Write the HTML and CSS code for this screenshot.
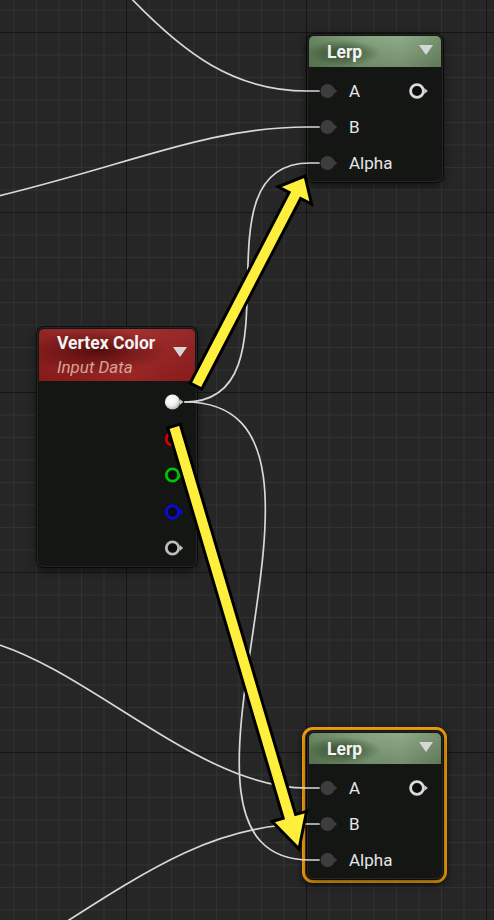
FILE: index.html
```html
<!DOCTYPE html>
<html>
<head>
<meta charset="utf-8">
<link rel="stylesheet" href="styles.css">
</head>
<body>
<div class="canvas">

  <div class="node lerp lerp-top">
    <div class="node-header"><span class="title">Lerp</span><span class="caret"></span></div>
    <div class="node-body">
      <div class="row">
        <svg class="pin-in" width="18" height="16" viewBox="0 0 18 16"><circle cx="7.5" cy="8" r="7" fill="#3d3d3d"/><path d="M14 5.2 L17.2 8 L14 10.8Z" fill="#3d3d3d"/></svg>
        <span class="label">A</span>
        <svg class="out" width="24" height="18" viewBox="0 0 24 18"><circle cx="9" cy="9" r="6.4" fill="#0c0c0c" stroke="#dadada" stroke-width="2.8"/><path d="M16.4 6 L19.8 9 L16.4 12Z" fill="#d0d0d0"/></svg>
      </div>
      <div class="row">
        <svg class="pin-in" width="18" height="16" viewBox="0 0 18 16"><circle cx="7.5" cy="8" r="7" fill="#3d3d3d"/><path d="M14 5.2 L17.2 8 L14 10.8Z" fill="#3d3d3d"/></svg>
        <span class="label">B</span>
      </div>
      <div class="row">
        <svg class="pin-in" width="18" height="16" viewBox="0 0 18 16"><circle cx="7.5" cy="8" r="7" fill="#3d3d3d"/><path d="M14 5.2 L17.2 8 L14 10.8Z" fill="#3d3d3d"/></svg>
        <span class="label">Alpha</span>
      </div>
    </div>
  </div>

  <div class="node vc">
    <div class="node-header">
      <div class="titles">
        <div class="title">Vertex Color</div>
        <div class="subtitle">Input Data</div>
      </div>
      <span class="caret"></span>
    </div>
    <div class="node-body">
      <div class="row">
        <svg width="22" height="18" viewBox="0 0 22 18"><defs><radialGradient id="wg" cx="40%" cy="35%" r="65%"><stop offset="0" stop-color="#ffffff"/><stop offset="0.6" stop-color="#f0f0f0"/><stop offset="1" stop-color="#b5b5b5"/></radialGradient></defs><circle cx="8.5" cy="9" r="7.6" fill="url(#wg)"/><path d="M16 6.2 L19.4 9 L16 11.8Z" fill="#c8c8c8"/></svg>
      </div>
      <div class="row">
        <svg width="22" height="18" viewBox="0 0 22 18"><circle cx="8.5" cy="9" r="6.2" fill="#0c0c0c" stroke="#d80000" stroke-width="2.8"/><path d="M15.8 6 L19.2 9 L15.8 12Z" fill="#d80000"/></svg>
      </div>
      <div class="row">
        <svg width="22" height="18" viewBox="0 0 22 18"><circle cx="8.5" cy="9" r="6.2" fill="#0c0c0c" stroke="#00c400" stroke-width="2.8"/><path d="M15.8 6 L19.2 9 L15.8 12Z" fill="#00c400"/></svg>
      </div>
      <div class="row">
        <svg width="22" height="18" viewBox="0 0 22 18"><circle cx="8.5" cy="9" r="6.2" fill="#0c0c0c" stroke="#0a0ae0" stroke-width="2.8"/><path d="M15.8 6 L19.2 9 L15.8 12Z" fill="#0a0ae0"/></svg>
      </div>
      <div class="row">
        <svg width="22" height="18" viewBox="0 0 22 18"><circle cx="8.5" cy="9" r="6.2" fill="#0c0c0c" stroke="#bdbdbd" stroke-width="2.8"/><path d="M15.8 6 L19.2 9 L15.8 12Z" fill="#bdbdbd"/></svg>
      </div>
    </div>
  </div>

  <div class="selected">
    <div class="node lerp">
      <div class="node-header"><span class="title">Lerp</span><span class="caret"></span></div>
      <div class="node-body">
        <div class="row">
          <svg class="pin-in" width="18" height="16" viewBox="0 0 18 16"><circle cx="7.5" cy="8" r="7" fill="#3d3d3d"/><path d="M14 5.2 L17.2 8 L14 10.8Z" fill="#3d3d3d"/></svg>
          <span class="label">A</span>
          <svg class="out" width="24" height="18" viewBox="0 0 24 18"><circle cx="9" cy="9" r="6.4" fill="#0c0c0c" stroke="#dadada" stroke-width="2.8"/><path d="M16.4 6 L19.8 9 L16.4 12Z" fill="#d0d0d0"/></svg>
        </div>
        <div class="row">
          <svg class="pin-in" width="18" height="16" viewBox="0 0 18 16"><circle cx="7.5" cy="8" r="7" fill="#3d3d3d"/><path d="M14 5.2 L17.2 8 L14 10.8Z" fill="#3d3d3d"/></svg>
          <span class="label">B</span>
        </div>
        <div class="row">
          <svg class="pin-in" width="18" height="16" viewBox="0 0 18 16"><circle cx="7.5" cy="8" r="7" fill="#3d3d3d"/><path d="M14 5.2 L17.2 8 L14 10.8Z" fill="#3d3d3d"/></svg>
          <span class="label">Alpha</span>
        </div>
      </div>
    </div>
  </div>

  <svg class="wires" width="494" height="920" viewBox="0 0 494 920">
    <g fill="none" stroke="#d8d8d8" stroke-width="1.7" stroke-linecap="round">
      <path d="M128 -5 C185 55, 235 91, 307 91 L319 91"/>
      <path d="M-40 205 C120 170, 200 127, 307 127 L319 127"/>
      <path d="M185 402 C305 402, 190 163, 310 163 L319 163"/>
      <path d="M185 402 C385 402, 125 860, 310 860 L319 860"/>
      <path d="M-10 642 C90 670, 200 788, 307 788 L319 788"/>
      <path d="M30 945 C140 875, 210 824, 307 824 L319 824"/>
    </g>
  </svg>

  <svg class="arrows" width="494" height="920" viewBox="0 0 494 920">
    <g fill="#fdef3c" stroke="#000" stroke-width="3" stroke-linejoin="miter">
      <polygon points="201.8,389 300.6,198.5 311.6,204.2 305,176 278.2,186.8 289.1,192.5 190.2,383"/>
      <polygon points="167.8,427.9 283.2,818.3 272.2,821.5 299,849 306.6,811.4 295.6,814.5 180.2,424.1"/>
    </g>
  </svg>
</div>
</body>
</html>
```

FILE: styles.css
```css
html, body {
  margin: 0;
  padding: 0;
  background: #262626;
}

.canvas {
  position: relative;
  width: 494px;
  height: 920px;
  overflow: hidden;
  background-color: #262626;
  background-image:
    linear-gradient(to right, #151515 1px, transparent 1px),
    linear-gradient(to bottom, #151515 1px, transparent 1px),
    linear-gradient(to right, #323232 1px, transparent 1px),
    linear-gradient(to bottom, #323232 1px, transparent 1px);
  background-size: 180px 180px, 180px 180px, 22.5px 22.5px, 22.5px 22.5px;
  background-position: 126px 32px, 126px 32px, 13.5px 9.5px, 13.5px 9.5px;
  font-family: Roboto, "Noto Sans", sans-serif;
}

.wires, .arrows {
  position: absolute;
  left: 0;
  top: 0;
}
.wires { z-index: 2; }
.arrows { z-index: 3; }

.node {
  position: absolute;
  box-sizing: border-box;
  padding: 2px 2px 0;
  background: rgba(19, 21, 19, 0.95);
  border-radius: 7px;
  box-shadow: inset 0 0 0 1px rgba(255, 255, 255, 0.07), 0 0 0 1px rgba(0, 0, 0, 0.6), 0 3px 8px rgba(0, 0, 0, 0.6);
  z-index: 1;
}

.node-header {
  display: flex;
  justify-content: space-between;
  align-items: flex-start;
  box-sizing: border-box;
  border-radius: 5px 5px 0 0;
  padding: 0 8px 0 18px;
}

.title {
  font-weight: 700;
  font-size: 17.5px;
  line-height: 20px;
  color: #f3f3f3;
}

.caret {
  width: 0;
  height: 0;
  border-left: 7.5px solid transparent;
  border-right: 7.5px solid transparent;
  border-top: 10px solid #d6d6d6;
}

.label {
  margin-left: 11px;
  font-size: 17px;
  color: #e6e6e6;
}

.row {
  display: flex;
  align-items: center;
}

.row svg { display: block; }

/* Lerp */
.lerp {
  width: 136px;
  height: 148px;
}
.lerp-top {
  left: 307px;
  top: 34px;
}
.lerp .node-header {
  height: 31px;
  background:
    radial-gradient(ellipse 38px 13px at 34px 17px, rgba(42, 62, 36, 0.85), rgba(42, 62, 36, 0)),
    linear-gradient(180deg, rgba(255, 255, 255, 0.07), rgba(0, 0, 0, 0.12)),
    linear-gradient(90deg, #5e7e56 0%, #7f9e77 45%, #86a37e 70%, #6c8a64 100%);
}
.lerp .title { padding-top: 6px; }
.lerp .caret { margin-top: 9px; }
.lerp .node-body { padding-top: 6px; }
.lerp .row {
  height: 36px;
  padding-left: 11px;
}
.lerp .out {
  margin-left: auto;
  margin-right: 9px;
}

/* Vertex Color */
.vc {
  left: 37px;
  top: 327px;
  width: 160px;
  height: 240px;
}
.vc .node-header {
  height: 52px;
  background:
    radial-gradient(ellipse 72px 22px at 58px 22px, rgba(75, 8, 8, 0.85), rgba(75, 8, 8, 0)),
    linear-gradient(180deg, rgba(255, 255, 255, 0.05), rgba(0, 0, 0, 0.05)),
    linear-gradient(90deg, #8c1a1a 0%, #a02626 60%, #8e1c1c 100%);
}
.vc .titles { padding-top: 3px; }
.vc .title { line-height: 22px; }
.vc .subtitle {
  font-style: italic;
  font-size: 17px;
  line-height: 22px;
  margin-top: 2px;
  color: #d3a595;
}
.vc .caret { margin-top: 18px; }
.vc .node-body { padding-top: 3px; }
.vc .row {
  height: 36.5px;
  justify-content: flex-end;
  padding-right: 9.5px;
}

/* selected */
.selected {
  position: absolute;
  left: 302px;
  top: 727px;
  box-sizing: border-box;
  width: 145px;
  height: 156px;
  padding: 1px 1px 1px 2px;
  border: 3px solid #f2a20e;
  border-radius: 11px;
  box-shadow: inset 0 0 0 1px rgba(120, 60, 0, 0.6), 0 2px 6px rgba(0, 0, 0, 0.5);
  z-index: 1;
}
.selected .node {
  position: relative;
}
```
